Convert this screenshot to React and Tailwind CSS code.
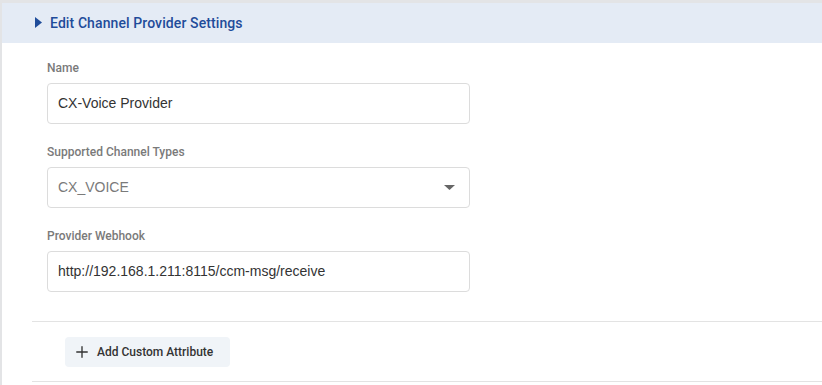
import { Plus } from "lucide-react";

const fields = [
  { label: "Name", value: "CX-Voice Provider" },
  { label: "Supported Channel Types", value: "CX_VOICE", select: true },
  { label: "Provider Webhook", value: "http://192.168.1.211:8115/ccm-msg/receive" },
];

export default function App() {
  return (
    <div className="w-[822px] h-[385px] overflow-hidden bg-[#e3e4e6] pt-[3px] pl-[2px]">
      <div className="h-full bg-white">
        <div className="h-[40px] bg-[#e4ebf5] flex items-center pl-[33px] gap-[8px] font-['Roboto',sans-serif]">
          <svg width="7" height="11" viewBox="0 0 7 11" className="mt-[-1px]">
            <path d="M0 0 L7 5.5 L0 11 Z" fill="#1f4c9a" />
          </svg>
          <span className="text-[14px] font-medium text-[#1f4c9a] tracking-[0.1px]">
            Edit Channel Provider Settings
          </span>
        </div>

        <div className="pl-[45px] pt-[18px]">
          {fields.map((f) => (
            <div key={f.label} className="mb-[21px] last:mb-[29px]">
              <div className="text-[12px] font-medium text-[#7a7a7a] font-['Roboto',sans-serif] leading-[14px] mb-[8px]">
                {f.label}
              </div>
              <div className="w-[423px] h-[41px] border border-[#dcdcdc] rounded-[4px] flex items-center pl-[10px] pr-[14px] font-['Liberation_Sans',Arial,sans-serif] text-[14px]">
                <span className={f.select ? "flex-1 text-[#7a7a7a]" : "flex-1 text-[#333]"}>
                  {f.value}
                </span>
                {f.select && (
                  <svg width="11" height="5" viewBox="0 0 11 5">
                    <path d="M0 0 L11 0 L5.5 5 Z" fill="#666" />
                  </svg>
                )}
              </div>
            </div>
          ))}
        </div>

        <div className="ml-[30px] border-t border-[#e3e3e3] pt-[15px] pb-[14px] pl-[33px]">
          <button className="h-[30px] w-[165px] bg-[#f0f4f8] rounded-[4px] flex items-center pl-[8px] gap-[6px] font-['Roboto',sans-serif] text-[12px] font-medium text-[#333]">
            <Plus size={18} strokeWidth={1.8} className="text-[#333]" />
            Add Custom Attribute
          </button>
        </div>
        <div className="ml-[30px] border-t border-[#e3e3e3]" />
      </div>
    </div>
  );
}
